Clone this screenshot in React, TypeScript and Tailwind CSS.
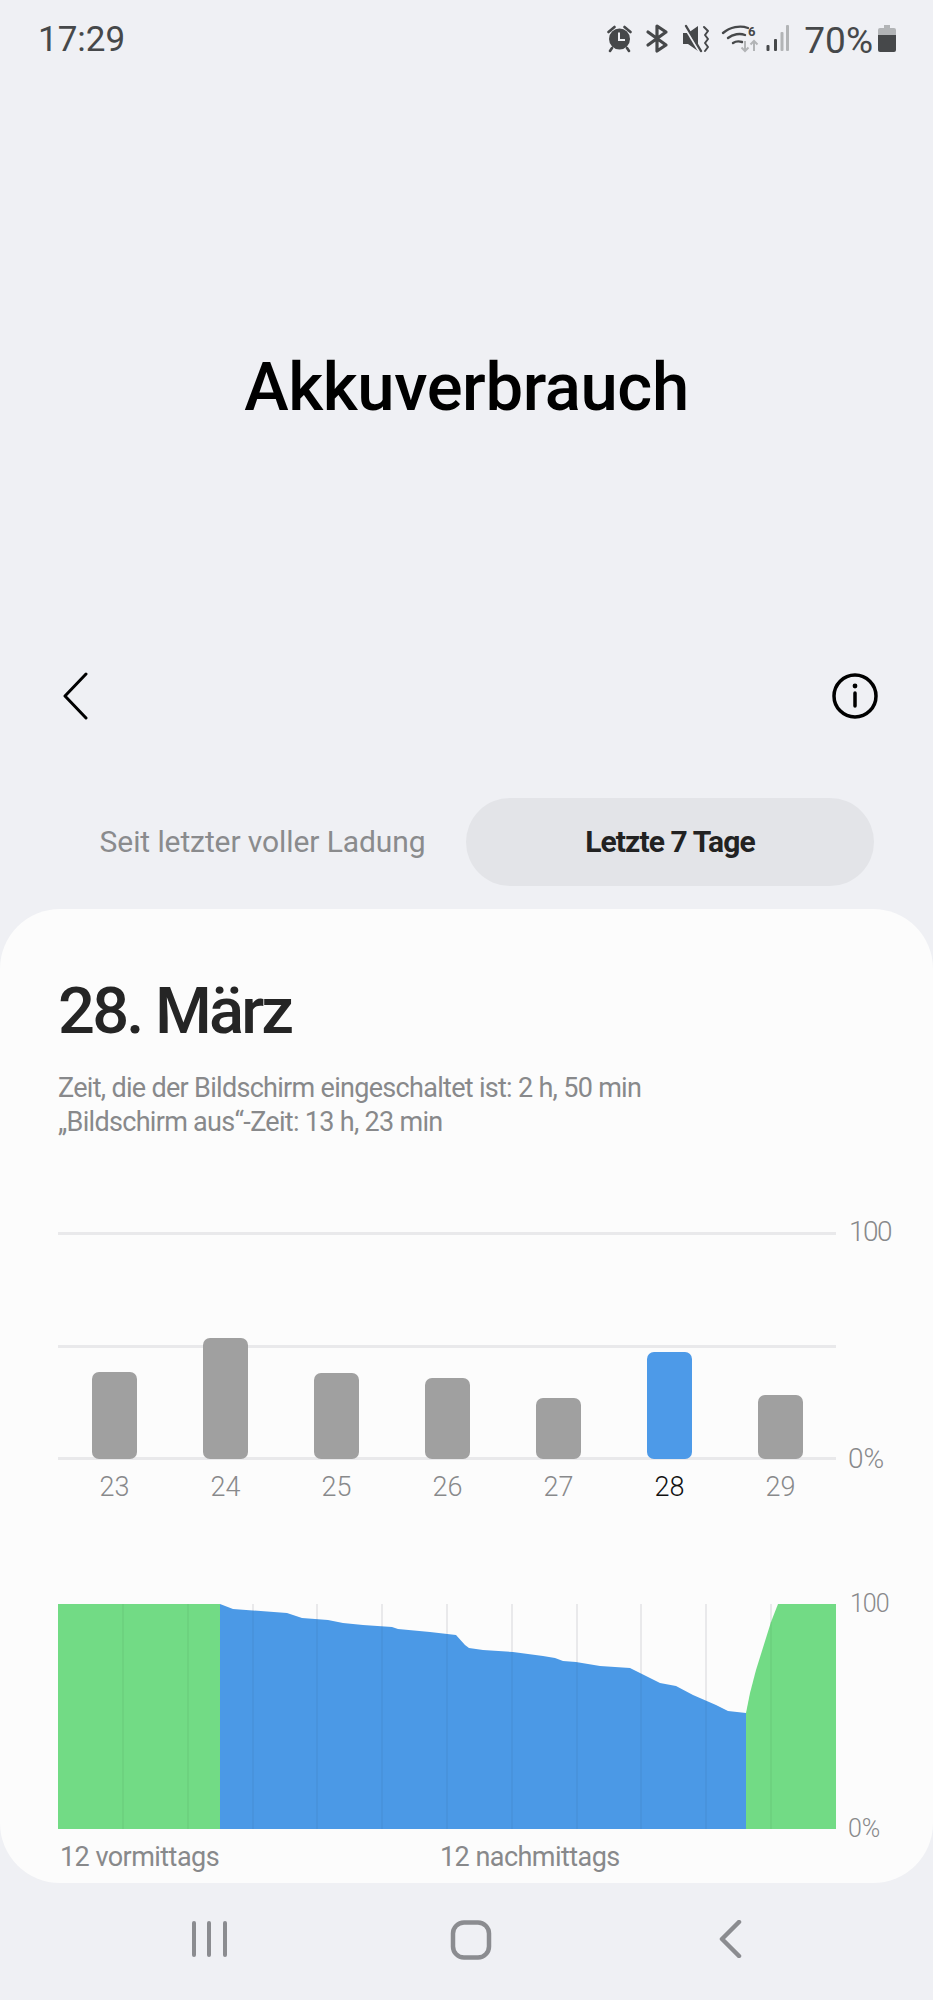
import React from 'react';

const bars = [
  { day: '23', height: 87 },
  { day: '24', height: 121 },
  { day: '25', height: 86 },
  { day: '26', height: 81 },
  { day: '27', height: 61 },
  { day: '28', height: 107, active: true },
  { day: '29', height: 64 },
];

const gridX = [123, 188, 253, 317, 382, 447, 512, 577, 641, 706, 771];

const bluePath =
  'M220 1604 L233 1609 L287 1613 L302 1618 L328 1620 L343 1623 L363 1625 L392 1627 L398 1629 L430 1632 L456 1635 L465 1645 L469 1648 L483 1650 L513 1652 L543 1656 L555 1658 L563 1661 L576 1662 L600 1666 L630 1668 L640 1673 L660 1683 L676 1686 L693 1695 L716 1705 L728 1711 L746 1713 L746 1829 L220 1829 Z';
const greenRight = 'M746 1713 L750 1693 L756 1670 L771 1622 L778 1604 L836 1604 L836 1829 L746 1829 Z';

// status icons are drawn in page coordinates, viewBox starts at x 608
const StatusIcons = () => (
  <svg width="182" height="32" viewBox="608 24 182 32" className="block">
    {/* alarm */}
    <circle cx="620.5" cy="41" r="10.5" fill="#46484a" />
    <path d="M609.5 34l6-5M631.5 34l-6-5M613 50l-2 3M628 50l2 3" stroke="#46484a" strokeWidth="2.6" strokeLinecap="round" fill="none" />
    <path d="M620 34.5v7.5h6" stroke="#eff0f4" strokeWidth="2" fill="none" />
    {/* bluetooth */}
    <path d="M649 34 L667 47 L658 53 V28 L667 34 L649 47" fill="none" stroke="#46484a" strokeWidth="3.2" strokeLinejoin="round" strokeLinecap="round" />
    {/* mute + vibrate */}
    <path d="M684 35h5l10-7v25l-10-7h-5z" fill="#46484a" />
    <path d="M685 28l15 25" stroke="#eff0f4" strokeWidth="2.4" />
    <path d="M687 28l15 25" stroke="#46484a" strokeWidth="2.4" strokeLinecap="round" />
    <path d="M705 29l4 4-3 4 3 4-3 4 3 4-3 4" fill="none" stroke="#46484a" strokeWidth="2" strokeLinejoin="round" strokeLinecap="round" />
    {/* wifi */}
    <g fill="none" stroke="#46484a" strokeWidth="2.4" strokeLinecap="round">
      <path d="M724 35c7-6 17-8 25-5" />
      <path d="M729 40c5-4 12-5 17-3" />
      <path d="M734 45c3-2 6-2 9-1" />
    </g>
    <text x="749" y="38" fontSize="13" fontWeight="700" fill="#46484a" fontFamily="Roboto, sans-serif">6</text>
    <path d="M746 43v10m-3.5-3.5l3.5 3.5 3.5-3.5" fill="none" stroke="#b2b4b6" strokeWidth="2" />
    <path d="M755 53v-10m-3.5 3.5l3.5-3.5 3.5 3.5" fill="none" stroke="#b2b4b6" strokeWidth="2" />
    {/* signal */}
    <rect x="767.5" y="47" width="3" height="6" rx="1" fill="#46484a" />
    <rect x="775" y="41" width="3" height="12" rx="1" fill="#46484a" />
    <rect x="781.5" y="34" width="3" height="19" rx="1" fill="#b2b4b6" />
    <rect x="787" y="27" width="3" height="26" rx="1" fill="#b2b4b6" />
  </svg>
);

const Battery = () => (
  <svg width="18" height="27" viewBox="0 0 18 27" className="block">
    <path d="M6 0h6v3h4a2 2 0 012 2v6H0V5a2 2 0 012-2h4z" fill="#b2b4b6" />
    <path d="M0 10h18v15a2 2 0 01-2 2H2a2 2 0 01-2-2z" fill="#46484a" />
  </svg>
);

function blueTop(x: number) {
  const pts = bluePath.replace(/[MLZ]/g, ' ').trim().split(/\s+/).map(Number);
  for (let i = 0; i + 3 < pts.length; i += 2) {
    const [x1, y1, x2, y2] = [pts[i], pts[i + 1], pts[i + 2], pts[i + 3]];
    if (x >= x1 && x <= x2 && x2 > x1) return y1 + ((x - x1) / (x2 - x1)) * (y2 - y1);
  }
  return 1604;
}

export default function App() {
  return (
    <div className="font-['Roboto',sans-serif] w-[933px] h-[2000px] bg-[#eff0f4] flex flex-col overflow-hidden">
      {/* status bar */}
      <div className="h-[76px] pl-[38px] pr-[37px] flex items-center justify-between">
        <span className="pt-[2px] text-[35px] leading-none text-[#46484a]">17:29</span>
        <div className="flex items-center">
          <StatusIcons />
          <span className="ml-[15px] pt-[4px] text-[37px] leading-none text-[#46484a]">70%</span>
          <div className="ml-[5px]">
            <Battery />
          </div>
        </div>
      </div>

      {/* title */}
      <h1 className="mt-[271px] h-[80px] text-center text-[67px] leading-[80px] tracking-[-0.4px] font-medium text-black">Akkuverbrauch</h1>

      {/* app bar */}
      <div className="mt-[246px] h-[46px] pl-[61px] pr-[55px] flex items-center justify-between">
        <svg width="28" height="48" viewBox="0 0 28 48" fill="none" stroke="#000" strokeWidth="3" strokeLinecap="round" strokeLinejoin="round">
          <path d="M25 2 L4 24 L25 46" />
        </svg>
        <svg width="46" height="46" viewBox="0 0 46 46" fill="none" stroke="#000" strokeWidth="3.5">
          <circle cx="23" cy="23" r="21" />
          <path d="M23 20v13" strokeLinecap="round" />
          <circle cx="23" cy="13" r="2.4" fill="#000" stroke="none" />
        </svg>
      </div>

      {/* tabs */}
      <div className="mt-[79px] h-[88px] pl-[59px] pr-[59px] flex items-center">
        <div className="w-[407px] pb-[2px] text-center text-[30px] tracking-[-0.1px] text-[#8a8b8d]">Seit letzter voller Ladung</div>
        <div className="flex-1 h-full pb-[2px] rounded-full bg-[#e3e4e8] flex items-center justify-center text-[30px] tracking-[-0.9px] font-bold text-[#222]">
          Letzte 7 Tage
        </div>
      </div>

      {/* card */}
      <div className="mt-[23px] h-[974px] rounded-[60px] bg-[#fcfcfc] pt-[64px] pl-[58px] flex flex-col">
        <h2 className="text-[65px] leading-[76px] tracking-[-2.8px] font-medium text-[#252525]">28. März</h2>
        <div className="mt-[22px] text-[27px] leading-[34px] tracking-[-0.7px] text-[#88898b]">
          <p>Zeit, die der Bildschirm eingeschaltet ist: 2 h, 50 min</p>
          <p>„Bildschirm aus“-Zeit: 13 h, 23 min</p>
        </div>

        {/* bars */}
        <div className="mt-[93px] relative w-[778px] h-[228px]">
          <div className="h-full flex flex-col justify-between">
            <div className="h-[3px] bg-[#e9e9eb]" />
            <div className="h-[3px] bg-[#e9e9eb]" />
            <div className="h-[3px] bg-[#e9e9eb]" />
          </div>
          <div className="absolute left-[34px] right-[33px] bottom-[1px] flex items-end justify-between">
            {bars.map((b) => (
              <div
                key={b.day}
                className={`w-[45px] rounded-[7px] ${b.active ? 'bg-[#4d9ae8]' : 'bg-[#a0a0a0]'}`}
                style={{ height: b.height }}
              />
            ))}
          </div>
          <span className="absolute left-[791px] top-[-16px] text-[28px] leading-[32px] tracking-[-1.5px] font-light text-[#88898b]">100</span>
          <span className="absolute left-[790px] bottom-[-15px] text-[28px] leading-[32px] font-light text-[#88898b]">0%</span>
        </div>
        <div className="mt-[10px] w-[778px] pl-[34px] pr-[33px] flex justify-between">
          {bars.map((b) => (
            <span key={b.day} className={`w-[45px] text-center text-[27px] leading-[34px] font-light ${b.active ? 'text-[#111]' : 'text-[#88898b]'}`}>
              {b.day}
            </span>
          ))}
        </div>

        {/* battery level chart */}
        <div className="mt-[100px] relative w-[778px] h-[225px]">
          <svg width="778" height="225" viewBox="58 1604 778 225" className="block">
            {gridX.map((x) => (
              <line key={x} x1={x} x2={x} y1={1604} y2={1829} stroke="#e9e9eb" strokeWidth="2" />
            ))}
            <rect x="58" y="1604" width="162" height="225" fill="#72db85" />
            <path d={bluePath} fill="#4b99e6" />
            <path d={greenRight} fill="#72db85" />
            {gridX.map((x) => {
              const top = x < 220 ? 1604 : x === 771 ? 1622 : blueTop(x);
              return <line key={x} x1={x} x2={x} y1={top} y2={1829} stroke="#000" strokeOpacity="0.04" strokeWidth="2" />;
            })}
          </svg>
          <span className="absolute left-[792px] top-[-15px] text-[25px] leading-[30px] tracking-[-1px] font-light text-[#88898b]">100</span>
          <span className="absolute left-[790px] bottom-[-15px] text-[25px] leading-[30px] font-light text-[#88898b]">0%</span>
        </div>
        <div className="mt-[10px] flex text-[27px] leading-[36px] tracking-[-0.55px] text-[#88898b]">
          <span className="ml-[2px] w-[380px]">12 vormittags</span>
          <span>12 nachmittags</span>
        </div>
      </div>

      {/* nav bar */}
      <div className="mt-[37px] flex items-start">
        <div className="ml-[190px]">
          <svg width="38" height="38" viewBox="0 0 38 38" fill="#8b8c90" className="block">
            <rect x="2" y="1" width="4" height="36" rx="2" />
            <rect x="17" y="1" width="4" height="36" rx="2" />
            <rect x="33" y="1" width="4" height="36" rx="2" />
          </svg>
        </div>
        <div className="ml-[222px]">
          <svg width="42" height="40" viewBox="0 0 42 40" fill="none" stroke="#8b8c90" strokeWidth="4.5" className="block">
            <rect x="3" y="2.5" width="36" height="35" rx="11" />
          </svg>
        </div>
        <div className="ml-[224px]">
          <svg width="26" height="38" viewBox="0 0 26 38" fill="none" stroke="#8b8c90" strokeWidth="4.5" strokeLinecap="round" strokeLinejoin="round" className="block">
            <path d="M23 2 L6 19 L23 36" />
          </svg>
        </div>
      </div>
    </div>
  );
}
